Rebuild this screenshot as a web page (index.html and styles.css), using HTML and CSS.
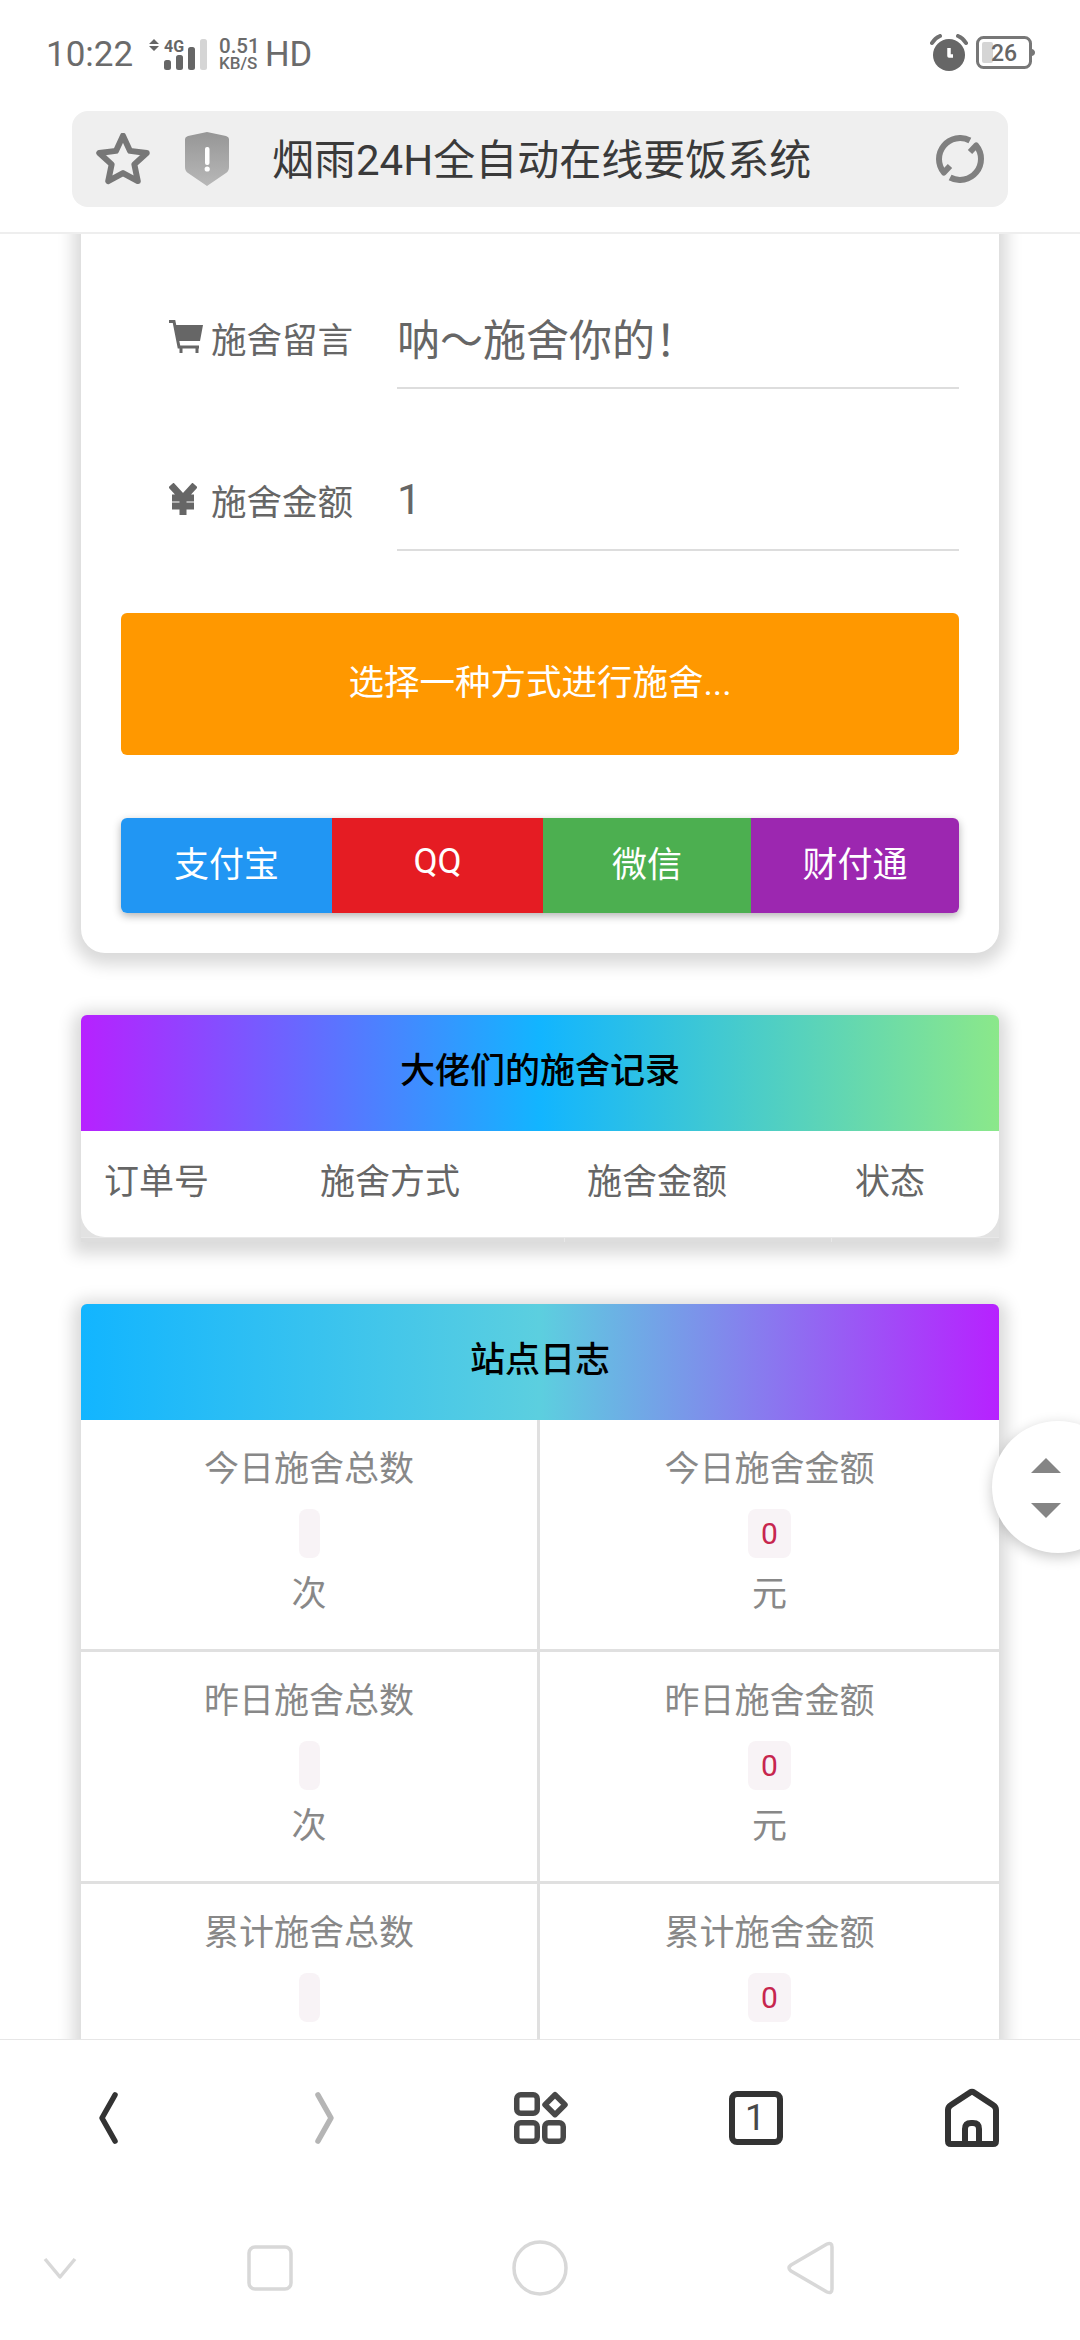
FILE: index.html
```html
<!DOCTYPE html>
<html lang="zh-CN">
<head>
<meta charset="utf-8">
<title>烟雨24H全自动在线要饭系统</title>
<link rel="stylesheet" href="styles.css">
</head>
<body>
<div class="page">
  <header class="top">
    <div class="status">
      <div class="status-left">
        <span class="time">10:22</span>
        <svg class="signal" width="60" height="32" viewBox="0 0 60 32">
          <path class="sig-dark" d="M5 1l5 5H0zM5 13l5-5H0z"/>
          <text class="sig-4g" x="15" y="14">4G</text>
          <rect class="sig-dark" x="15" y="22" width="7" height="10" rx="2.5"/>
          <rect class="sig-dark" x="27" y="17" width="7" height="15" rx="2.5"/>
          <rect class="sig-dark" x="39" y="9" width="7" height="23" rx="2.5"/>
          <rect class="sig-light" x="51" y="1" width="7" height="31" rx="2.5"/>
        </svg>
        <svg class="speed" width="46" height="32" viewBox="0 0 46 32">
          <text class="speed-rate" x="0" y="15">0.51</text>
          <text class="speed-unit" x="0" y="31">KB/S</text>
        </svg>
        <span class="hd">HD</span>
      </div>
      <div class="status-right">
        <svg width="38" height="38" viewBox="0 0 38 38">
          <circle class="sig-dark" cx="19" cy="21" r="16"/>
          <path class="alarm-hand" d="M19 14v8h4"/>
          <path class="alarm-ear" d="M2 9Q5 4 10 2M36 9Q33 4 28 2"/>
        </svg>
        <svg width="60" height="34" viewBox="0 0 60 34">
          <rect class="batt-shell" x="1.5" y="1.5" width="53" height="30" rx="6"/>
          <path class="batt-nub" d="M56 13q3 1 3 3.500t-3 3.500z"/>
          <rect class="sig-light" x="6" y="6" width="11" height="21" rx="2"/>
          <text class="batt-text" x="15" y="25">26</text>
        </svg>
      </div>
    </div>
    <div class="urlbar">
      <svg class="star" width="54" height="52" viewBox="2 2.500 50 48">
        <path d="M27 5l6.500 14 15.500 2-11.500 10.500 3.200 15.500L27 39.500 13.300 47l3.200-15.500L5 21l15.500-2z"/>
      </svg>
      <svg class="shield" width="44" height="54" viewBox="0 0 44 54">
        <defs><linearGradient id="sg" x1="0" y1="0" x2="0" y2="1"><stop offset="0" stop-color="#969696"/><stop offset="1" stop-color="#b8b8b8"/></linearGradient></defs>
        <path fill="url(#sg)" d="M22 0l19 4q3 1 3 3v28q0 4-3 6L22 54 3 41q-3-2-3-6V7q0-2 3-3z"/>
        <rect class="shield-mark" x="20" y="15" width="4.500" height="18" rx="2"/>
        <circle class="shield-mark" cx="22.200" cy="37" r="2.600"/>
      </svg>
      <span class="url-title">烟雨24H全自动在线要饭系统</span>
      <svg class="refresh" width="48" height="48" viewBox="0 0 48 48">
        <path d="M33.900 5.500A21 21 0 0 0 7.900 37.500L14 31M14.100 42.500A21 21 0 0 0 40.100 10.500L34 17"/>
      </svg>
    </div>
  </header>

  <main class="view">
    <section class="card form-card">
      <div class="field">
        <div class="field-label">
          <svg width="34" height="34" viewBox="0 0 34 34">
            <path class="icon-fill" d="M6 5h28l-3 16H9z"/>
            <path class="cart-line" d="M0 1.500h5L10 27h20M12 27v6M28 27v6"/>
          </svg>
          <span>施舍留言</span>
        </div>
        <div class="field-input">呐～施舍你的！</div>
      </div>
      <div class="field">
        <div class="field-label">
          <svg class="yen-icon" width="28" height="32" viewBox="0 0 28 32">
            <path class="yen" d="M2 2l12 13L26 2M14 13v19M3 15h22M3 23h22"/>
          </svg>
          <span>施舍金额</span>
        </div>
        <div class="field-input">1</div>
      </div>
      <div class="prompt">选择一种方式进行施舍...</div>
      <div class="pay-group">
        <span class="pay pay-blue">支付宝</span>
        <span class="pay pay-red">QQ</span>
        <span class="pay pay-green">微信</span>
        <span class="pay pay-purple">财付通</span>
      </div>
    </section>

    <section class="card list-card">
      <h3 class="card-head head-one">大佬们的施舍记录</h3>
      <div class="records">
        <span>订单号</span><span>施舍方式</span><span>施舍金额</span><span>状态</span>
      </div>
      <div class="records-edge"><span></span><span></span><span></span></div>
    </section>

    <section class="card list-card">
      <h3 class="card-head head-two">站点日志</h3>
      <div class="stats">
        <div class="stat"><p>今日施舍总数</p><code></code><p class="unit">次</p></div>
        <div class="stat"><p>今日施舍金额</p><code>0</code><p class="unit">元</p></div>
        <div class="stat"><p>昨日施舍总数</p><code></code><p class="unit">次</p></div>
        <div class="stat"><p>昨日施舍金额</p><code>0</code><p class="unit">元</p></div>
        <div class="stat"><p>累计施舍总数</p><code></code></div>
        <div class="stat"><p>累计施舍金额</p><code>0</code></div>
      </div>
    </section>
  </main>

  <div class="scroller">
    <span class="tri tri-up"></span>
    <span class="tri tri-down"></span>
  </div>

  <footer class="bottom">
    <nav class="toolbar">
      <svg width="22" height="54" viewBox="0 0 22 54"><path class="tb-back" d="M18 4L5 27l13 23"/></svg>
      <svg width="22" height="54" viewBox="0 0 22 54"><path class="tb-fwd" d="M5 4l13 23L5 50"/></svg>
      <svg width="56" height="56" viewBox="0 0 56 56">
        <g class="tb-grid">
          <rect x="4.750" y="4.750" width="20.500" height="18.500" rx="4"/>
          <rect x="4.750" y="32.750" width="20.500" height="18.500" rx="4"/>
          <rect x="32.750" y="32.750" width="18.500" height="18.500" rx="4"/>
          <path d="M43 4.700l10 10-10 10-10-10z"/>
        </g>
      </svg>
      <svg width="56" height="56" viewBox="0 0 56 56">
        <rect class="tb-line" x="4" y="4" width="48" height="48" rx="5"/>
        <text class="tb-count" x="27" y="40">1</text>
      </svg>
      <svg width="56" height="60" viewBox="0 0 56 60">
        <path class="tb-line" d="M4 22q0-3 3-5L26 4.500q2-1.500 4 0L49 17q3 2 3 5v31q0 3-3 3H7q-3 0-3-3zM21 56V41q0-6 6-6h2q6 0 6 6v15"/>
      </svg>
    </nav>
    <nav class="sysnav">
      <svg width="34" height="24" viewBox="0 0 34 24"><path class="sys-line" d="M2 3l15 18L32 3"/></svg>
      <svg width="46" height="46" viewBox="0 0 46 46"><rect class="sys-line" x="2" y="2" width="42" height="42" rx="6"/></svg>
      <svg width="56" height="56" viewBox="0 0 56 56"><circle class="sys-line" cx="28" cy="28" r="26"/></svg>
      <svg width="48" height="54" viewBox="0 0 48 54"><path class="sys-line" d="M41 3q5-2 5 3v42q0 5-5 3L5 30q-4-3 0-6z"/></svg>
    </nav>
  </footer>
</div>
</body>
</html>
```

FILE: styles.css
```css
* { box-sizing: border-box; }
html, body { margin: 0; padding: 0; background: #fff; }
body { font-family: Roboto, "Noto Sans CJK SC", sans-serif; }
.page { position: relative; width: 1080px; height: 2340px; overflow: hidden; display: flex; flex-direction: column; background: #fff; }

/* browser chrome */
.top { flex: none; height: 234px; background: #fff; border-bottom: 2px solid #eee; position: relative; z-index: 2; }
.status { height: 111px; padding: 0 44px 0 46px; display: flex; justify-content: space-between; align-items: flex-start; }
.status-left { display: flex; align-items: center; height: 32px; margin-top: 38px; color: #6b6b6b; }
.time { font-size: 35px; width: 103px; }
.signal { margin-right: 10px; }
.sig-dark { fill: #666; }
.sig-light { fill: #d5d5d5; }
.sig-4g { font: 700 16px Roboto, sans-serif; fill: #666; }
.speed { flex: none; overflow: visible; }
.speed-rate { font: 500 20.500px Roboto, sans-serif; fill: #6b6b6b; }
.speed-unit { font: 500 17px Roboto, sans-serif; fill: #6b6b6b; }
.hd { font-size: 34.500px; }
.status-right { display: flex; align-items: center; gap: 8px; margin-top: 34px; }
.alarm-hand { fill: none; stroke: #fff; stroke-width: 3.500; stroke-linejoin: round; }
.alarm-ear { fill: none; stroke: #707070; stroke-width: 4; stroke-linecap: round; }
.batt-shell { fill: none; stroke: #777; stroke-width: 3; }
.batt-nub { fill: #777; }
.batt-text { font: 500 23px Roboto, sans-serif; fill: #666; }

.urlbar { height: 96px; margin: 0 72px; background: #efefef; border-radius: 16px; display: flex; align-items: center; padding: 0 24px; }
.star { flex: none; }
.star path { fill: none; stroke: #777; stroke-width: 5.500; stroke-linejoin: round; }
.shield { flex: none; margin-left: 35px; }
.shield-mark { fill: #fff; }
.url-title { flex: 1; margin-left: 43px; padding-bottom: 5px; font-size: 42px; color: #3a3a3a; white-space: nowrap; }
.refresh { flex: none; }
.refresh path { fill: none; stroke: #808080; stroke-width: 6; stroke-linejoin: round; }

/* scrolling content */
.view { flex: 1; min-height: 0; overflow: hidden; padding: 0 81px; display: flex; flex-direction: column; gap: 62px; border-bottom: 1px solid #e6e6e6; }
.card { flex: none; background: #fff; box-shadow: 0 4px 16px 8px rgba(0,0,0,.15); }

.form-card { margin-top: -40px; padding: 87px 40px 40px; border-radius: 0 0 24px 24px; }
.field { display: flex; margin-bottom: 54px; }
.field + .field { margin-bottom: 62px; }
.field-label { width: 232px; height: 106px; padding-top: 6px; display: flex; justify-content: flex-end; align-items: center; gap: 8px; font-size: 35.500px; color: #666; white-space: nowrap; }
.yen-icon { margin-right: 6px; }
.field-input { margin-left: 44px; flex: 1; height: 108px; border-bottom: 2.500px solid #ddd; display: flex; align-items: center; padding-top: 6px; font-size: 43px; color: #666; }
.icon-fill { fill: #666; }
.cart-line { fill: none; stroke: #666; stroke-width: 3; }
.yen { fill: none; stroke: #666; stroke-width: 7; }
.prompt { height: 142px; padding-bottom: 9px; background: #ff9800; border-radius: 6px; display: flex; align-items: center; justify-content: center; color: #fff; font-size: 35.500px; }
.pay-group { margin-top: 63px; height: 95px; display: grid; grid-template-columns: 211px 211px 208px 208px; border-radius: 6px; overflow: hidden; box-shadow: 0 3px 8px rgba(0,0,0,.3); position: relative; }
.pay { display: flex; align-items: center; justify-content: center; padding-bottom: 9px; color: #fff; font-size: 35px; }
.pay-blue { background: #2196f3; }
.pay-red { background: #e51c23; }
.pay-green { background: #4caf50; }
.pay-purple { background: #9c27b0; }

.list-card { border-radius: 6px 6px 0 0; background: #e2e2e2; }
.card-head { margin: 0; height: 116px; padding-bottom: 11px; display: flex; align-items: center; justify-content: center; font-size: 35px; font-weight: 500; color: #000; border-radius: 6px 6px 0 0; }
.head-one { background: linear-gradient(to right, #b721ff, #12b5ff 50%, #8be88a); }
.head-two { background: linear-gradient(to right, #12b5ff, #5ccfdf 50%, #b721ff); }

.records { height: 106px; padding: 0 0 12px 23px; background: #fff; border-radius: 0 0 24px 24px; display: grid; grid-template-columns: 216px 267px 268px 1fr; align-items: center; font-size: 35px; color: #666; }
.records-edge { height: 5px; display: grid; grid-template-columns: 483px 267px 1fr; background: #ddd; border-top: 1px solid #e8e8e8; }
.records-edge span + span { border-left: 1px solid #e8e8e8; }

.stats { display: grid; grid-template-columns: 459px 459px; background: #fff; }
.stat { height: 232px; display: flex; flex-direction: column; align-items: center; padding-top: 23px; border-bottom: 3px solid #e0e0e0; }
.stat:nth-child(odd) { border-right: 3px solid #e0e0e0; }
.stat p { margin: 0; height: 50px; line-height: 50px; padding-top: 2px; font-size: 35px; color: #888; }
.stat code { margin-top: 16px; min-width: 21px; height: 49px; padding: 0 13px; background: #f8f3f6; border-radius: 8px; color: #c7254e; font-family: Roboto, sans-serif; font-size: 30px; line-height: 49px; text-align: center; }
.stat code:empty { padding: 0; }
.stat .unit { margin-top: 10px; }

/* overlay */
.scroller { position: absolute; left: 992px; top: 1421px; width: 132px; height: 132px; border-radius: 50%; background: #fff; box-shadow: 0 4px 14px rgba(0,0,0,.22); z-index: 1; }
.tri { position: absolute; left: 39px; width: 0; height: 0; border-left: 15px solid transparent; border-right: 15px solid transparent; }
.tri-up { top: 37px; border-bottom: 15px solid #858585; }
.tri-down { top: 82px; border-top: 15px solid #858585; }

/* bottom bars */
.bottom { flex: none; height: 300px; background: #fff; display: flex; flex-direction: column; position: relative; z-index: 2; }
.toolbar { height: 156px; display: grid; grid-template-columns: repeat(5, 1fr); justify-items: center; align-items: center; }
.sysnav { height: 144px; padding-right: 120px; display: grid; grid-template-columns: 120px 300px 240px 300px; justify-items: center; align-items: center; }
.bottom svg { display: block; }
.tb-back { fill: none; stroke: #333; stroke-width: 5.500; stroke-linecap: round; stroke-linejoin: round; }
.tb-fwd { fill: none; stroke: #b5b5b5; stroke-width: 5.500; stroke-linecap: round; stroke-linejoin: round; }
.tb-grid > * { fill: none; stroke: #484848; stroke-width: 5.500; stroke-linejoin: round; }
.tb-line { fill: none; stroke: #333; stroke-width: 6; }
.tb-count { font: 400 36px Roboto, sans-serif; fill: #484848; text-anchor: middle; }
.sys-line { fill: none; stroke: #d8d8d8; stroke-width: 3.500; stroke-linejoin: round; }
```
